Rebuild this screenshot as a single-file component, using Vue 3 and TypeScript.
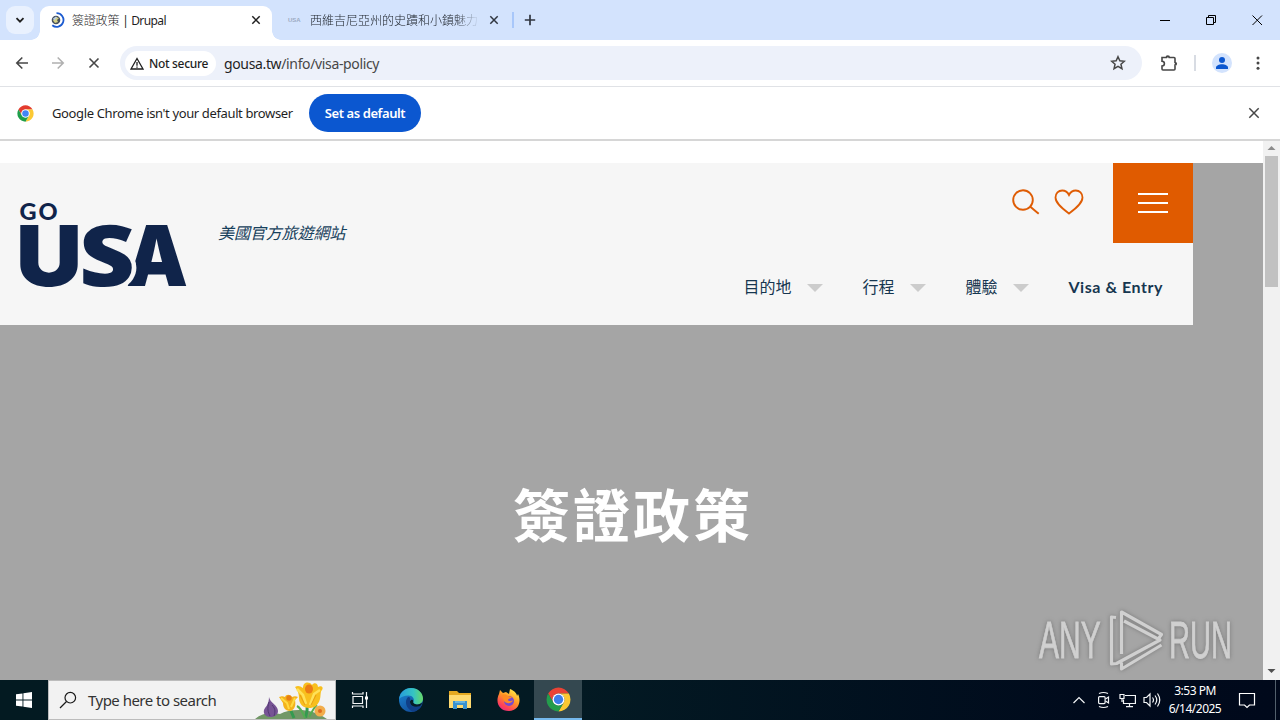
<script setup lang="ts">
interface NavItem {
  label: string
  menu: boolean
}

const nav: NavItem[] = [
  { label: '目的地', menu: true },
  { label: '行程', menu: true },
  { label: '體驗', menu: true },
  { label: 'Visa & Entry', menu: false },
]
</script>

<template>
  <div class="screen">
    <header class="tabs">
      <div class="tab-search">
        <svg width="10" height="10" viewBox="0 0 10 10"><path d="M1.5 3.2 5 6.7 8.5 3.2" fill="none" stroke="#1f1f1f" stroke-width="1.8" /></svg>
      </div>
      <div class="tab active">
        <svg class="favicon" width="16" height="16" viewBox="0 0 16 16">
          <circle cx="7" cy="8" r="4.3" fill="#46505e" />
          <path d="M4 8.5 7 5l3 1-2 2 1 2-3 1z" fill="#d6d184" />
          <path d="M4 6.5 7 4.5l1 1-3 3z" fill="#b9cfe8" />
          <path d="M7.5 1.2a6.8 6.8 0 1 1-4.2 12" fill="none" stroke="#1c5bd0" stroke-width="1.8" />
        </svg>
        <span class="tab-title">簽證政策 <span class="tab-latin">| Drupal</span></span>
        <svg class="x" width="10" height="10" viewBox="0 0 10 10"><path d="m1.3 1.3 7.4 7.4m0-7.4L1.3 8.7" stroke="#1f1f1f" stroke-width="1.5" /></svg>
      </div>
      <div class="tab idle">
        <span class="mini">USA</span>
        <span class="tab-title faded">西維吉尼亞州的史蹟和小鎮魅力</span>
        <svg class="x" width="10" height="10" viewBox="0 0 10 10"><path d="m1.3 1.3 7.4 7.4m0-7.4L1.3 8.7" stroke="#303640" stroke-width="1.5" /></svg>
      </div>
      <i class="tab-divider"></i>
      <svg class="plus" width="12" height="12" viewBox="0 0 12 12"><path d="M6 .8v10.4M.8 6h10.4" stroke="#303640" stroke-width="1.7" /></svg>
      <svg class="win-buttons" width="106" height="12" viewBox="0 0 106 12" fill="none" stroke="#000">
        <path d="M1 6.5h10M47.500 3.500h7v7h-7zM49.500 3.500v-2h7v7h-2M93.500 1.500l9.500 9.500m0-9.500l-9.500 9.500" />
      </svg>
    </header>

    <div class="toolbar">
      <svg class="nav-buttons" width="90" height="16" viewBox="0 0 90 16" fill="none" stroke-width="1.6">
        <path d="M14 8H3m5.300-5.500L2.800 8l5.500 5.500" stroke="#474747" />
        <path d="M38 8h11m-5.300-5.500L49.200 8l-5.500 5.500" stroke="#b0b0b0" />
        <path d="m75.500 3.500 9 9m0-9-9 9" stroke="#474747" />
      </svg>
      <div class="omnibox">
        <div class="chip">
          <svg width="14" height="13" viewBox="0 0 14 13" fill="none" stroke="#1f1f1f" stroke-width="1.3"><path d="M7 1.500 13 12H1zM7 5v3.800M7 9.500v1.300" /></svg>
          <span>Not secure</span>
        </div>
        <span class="url"><b>gousa.tw</b>/info/visa-policy</span>
        <svg class="star" width="16" height="16" viewBox="0 0 16 16"><path d="m8 1.700 1.850 4.100 4.500.45-3.400 3 1 4.450L8 11.400 4.050 13.700l1-4.450-3.400-3 4.500-.45z" fill="none" stroke="#474747" stroke-width="1.500" /></svg>
      </div>
      <svg class="ext" width="18" height="18" viewBox="0 0 18 18"><path d="M2 3.500h4.300a1.500 1.500 0 0 1 3 0H14a1 1 0 0 1 1 1v4a1.300 1.300 0 0 1 0 2.600V15a1 1 0 0 1-1 1H3a1 1 0 0 1-1-1v-3a2 2 0 0 0 0-4.800V3.500z" fill="none" stroke="#474747" stroke-width="1.600" /><path d="M6.300 3.500a1.500 1.500 0 0 1 3 0zM15 8.500a1.300 1.300 0 0 1 0 2.600z" fill="#474747" /></svg>
      <i class="bar-divider"></i>
      <svg class="avatar" width="20" height="20" viewBox="0 0 20 20"><circle cx="10" cy="10" r="10" fill="#d3e3fd" /><circle cx="10" cy="7" r="3" fill="#0b57d0" /><path d="M4 16v-1.500c0-2 3-3.300 6-3.300s6 1.300 6 3.300V16z" fill="#0b57d0" /></svg>
      <svg class="dots" width="4" height="16" viewBox="0 0 4 16" fill="#474747"><circle cx="2" cy="3" r="1.500" /><circle cx="2" cy="8" r="1.500" /><circle cx="2" cy="13.200" r="1.500" /></svg>
    </div>

    <div class="infobar">
      <svg width="17" height="17" viewBox="0 0 48 48">
        <circle cx="24" cy="24" r="23" fill="#fff" />
        <path d="M4.100 12.500A23 23 0 0 1 43.900 12.500H24A11.500 11.500 0 0 0 14 29.700z" fill="#e33b2e" />
        <path d="M43.900 12.500A23 23 0 0 1 24 47L34 29.700A11.500 11.500 0 0 0 24 12.500z" fill="#fcc934" />
        <path d="M24 47A23 23 0 0 1 4.100 12.500L14 29.700A11.500 11.500 0 0 0 34 29.700z" fill="#1e9e4a" />
        <circle cx="24" cy="24" r="11.500" fill="#fff" />
        <circle cx="24" cy="24" r="9.200" fill="#4285f4" />
      </svg>
      <span class="info-text">Google Chrome isn't your default browser</span>
      <button class="default-btn">Set as default</button>
      <svg class="info-x" width="12" height="12" viewBox="0 0 12 12"><path d="m1.300 1.300 9.400 9.400m0-9.400-9.400 9.400" stroke="#474747" stroke-width="1.500" /></svg>
    </div>

    <main class="viewport">
      <div class="page">
        <div class="site-header">
          <svg class="logo" width="170" height="90" viewBox="0 0 170 90">
            <g class="logo-type">
              <text class="go" x="0.500" y="18.500">GO</text>
              <text class="big" x="107" y="84.500" textLength="62" lengthAdjust="spacingAndGlyphs">A</text>
              <text class="big ess" x="60" y="84.500" textLength="56" lengthAdjust="spacingAndGlyphs">S</text>
              <text class="big" x="-3" y="84.500" textLength="66" lengthAdjust="spacingAndGlyphs">U</text>
            </g>
          </svg>
          <span class="tagline">美國官方旅遊網站</span>
          <div class="header-side">
            <div class="actions">
              <svg class="search" width="28" height="26" viewBox="0 0 28 26" fill="none" stroke="#df5c04" stroke-width="1.900"><circle cx="11" cy="11" r="9.800" /><path d="m18 17.500 8.700 7.300" /></svg>
              <svg class="heart" width="30" height="26" viewBox="0 0 30 26" fill="none" stroke="#df5c04" stroke-width="1.800"><path d="M15 24.500C9 20 1.500 14.500 1.500 8.500c0-4.200 3-7 6.700-7 3.200 0 5.500 1.800 6.800 4.500 1.300-2.700 3.600-4.500 6.800-4.500 3.700 0 6.700 2.800 6.700 7 0 6-7.500 11.500-13.500 16z" /></svg>
              <div class="burger"><i></i><i></i><i></i></div>
            </div>
            <nav class="menu">
              <span v-for="item in nav" :key="item.label" class="menu-item" :class="{ latin: !item.menu }">
                {{ item.label }}<i v-if="item.menu" class="caret"></i>
              </span>
            </nav>
          </div>
        </div>
        <h1>簽證政策</h1>
        <div class="watermark">
          <span class="wm">ANY</span>
          <svg width="56" height="62" viewBox="0 0 56 62" fill="none" stroke="#d0d0d0" stroke-width="3.200" stroke-linejoin="round">
            <path d="M7 7.500 2.500 7v47l5-.5L51 30 15 11M12.500 44V2l40 22.500-3 4M12.500 52.500v6.500l40-24" />
          </svg>
          <span class="wm run">RUN</span>
        </div>
      </div>
      <div class="scrollbar">
        <svg width="17" height="15" viewBox="0 1 17 15"><path d="M4.500 10 8.500 6l4 4z" fill="#8b8b8b" /></svg>
        <div class="thumb"></div>
        <svg class="down" width="17" height="17" viewBox="0 0 17 17"><path d="m4.500 6 4 4 4-4z" fill="#505050" /></svg>
      </div>
    </main>

    <footer class="taskbar">
      <div class="start">
        <svg width="16" height="16" viewBox="0 0 16 16" fill="#fff"><path d="M0 2.300 6.500 1.400v6.200H0zM7.400 1.300 16 0v7.600H7.400zM0 8.400h6.500v6.200L0 13.700zM7.400 8.400H16V16l-8.600-1.300z" /></svg>
      </div>
      <div class="search-box">
        <svg class="glass" width="18" height="18" viewBox="0 0 18 18" fill="none" stroke="#1a1a1a" stroke-width="1.200"><circle cx="11.300" cy="6.700" r="5.300" /><path d="M7.500 10.500 1 17" /></svg>
        <span class="search-text">Type here to search</span>
        <svg class="flowers" width="80" height="38" viewBox="0 0 80 38">
          <path d="M0 38c7-6 15-7 25-5 10-5 30-7 47 5z" fill="#719766" />
          <path d="M52 26c1 5-2 8-1 11M36 30l3 7" stroke="#359a50" stroke-width="3" fill="none" />
          <path d="M42 25c4 2 6 7 8 12M62 24c-3 2-5 7-8 12" stroke="#53ad50" stroke-width="2" fill="none" />
          <path d="M14 16c1 6 9 8 9 14 0 4-4 6-8 6s-7-3-6-7c1-3 5-5 5-13z" fill="#765394" />
          <path d="M14 21c-2 7-1 10 1 14m2-11c4 4 3 8 2 11" stroke="#513873" stroke-width="1" fill="none" />
          <path d="M24 16c3-1 4-1 6 0 1-3 5-3 7 0 2-1 4-1 6 0l-3 3c1 5 0 10-5 11-5 0-7-4-7-8z" fill="#f4b21b" />
          <path d="m26 17 6 5 2 6m6-11-4 9" stroke="#ffda42" stroke-width="2" fill="none" />
          <circle cx="34" cy="17" r="2.700" fill="#e87e13" />
          <path d="M40 6c3-2 5-1 8 1 0-6 6-7 9-3 2-3 6-2 6 2 3-2 6 0 4 3-2 2-1 6-2 9-2 7-6 9-11 9-6 0-10-4-10-10 0-4-1-7-4-11z" fill="#f8bf1d" />
          <path d="m42 8 6 6 3 9M65 9l-6 4-4 11" stroke="#ffe158" stroke-width="2.500" fill="none" />
          <path d="m45 14 5 10m11-10-5 10" stroke="#e79c12" fill="none" />
          <ellipse cx="54" cy="8" rx="4" ry="4.500" fill="#eb7c15" />
          <circle cx="65" cy="30" r="5.500" fill="#f2ad4b" /><circle cx="65" cy="30" r="2" fill="#df6b1d" />
        </svg>
      </div>
      <div class="app">
        <svg width="18" height="18" viewBox="0 0 18 18" fill="none" stroke="#f4f6f7" stroke-width="1.200"><path d="M2 5.500h9.500v7H2zM1.500 1v2h10.500V1M1.500 17v-2h10.500v2M15.500 1v16" /><path d="M14 5.500h3v3h-3z" fill="#fff" stroke="none" /></svg>
      </div>
      <div class="app edge">
        <svg width="26" height="26" viewBox="0 0 26 26">
          <defs>
            <linearGradient id="edgeTop" x1="0" x2="1"><stop stop-color="#279bdc" /><stop offset=".6" stop-color="#35c4c3" /><stop offset="1" stop-color="#67d967" /></linearGradient>
            <linearGradient id="edgeLow" x1="0" y1="0" x2=".6" y2="1"><stop stop-color="#1c8bd8" /><stop offset="1" stop-color="#124d9b" /></linearGradient>
          </defs>
          <circle cx="13" cy="13" r="12" fill="url(#edgeLow)" />
          <path d="M1.100 12C2 5 7 1 13 1c7 0 12 5 12 10.500 0 4-3 6-6.500 6-3 0-4-1.300-3.300-2.500 2-3-.7-6.500-4.700-6.500-4 0-7.500 1.500-9.400 3.500z" fill="url(#edgeTop)" />
          <path d="M10 10c-4 4-2 12 5 14.800 4-.8 7-3 8.500-6-6 2.800-12 .5-11.500-4 .1-2 1-3-.5-4.500z" fill="#103f87" />
          <path d="M12 14.500c1-2 2.500-2.200 3.300-.5-.6 1.600.5 2.800 2.500 3.300 2.500.6 5-.3 7-2-1 2-2 3-3 4-5 1.300-10-.3-9.800-4.800z" fill="#061c28" />
        </svg>
      </div>
      <div class="app folder">
        <svg width="22" height="20" viewBox="0 0 22 20"><path d="M0 1h8l2 2h12v15H0z" fill="#e5a921" /><path d="M0 5h22v13H0z" fill="#ffda70" /><path d="M4 11h14v8h-4v-4H8v4H4z" fill="#3a92cf" /><path d="M6 11h10v2H6z" fill="#68b4df" /></svg>
      </div>
      <div class="app fox">
        <svg width="24" height="24" viewBox="0 0 24 24">
          <defs><linearGradient id="foxFire" x1=".8" y1="0" x2=".2" y2="1"><stop stop-color="#fff14a" /><stop offset=".45" stop-color="#ff9427" /><stop offset=".8" stop-color="#ff405a" /><stop offset="1" stop-color="#e52b83" /></linearGradient></defs>
          <path d="M2 6 3 2l3 3 3-1 3 2 1-5c5 2 7 5 7 7l1-2c4 8 0 17-9 17C2 23-2 14 2 6z" fill="url(#foxFire)" />
          <circle cx="12" cy="13" r="5" fill="#7549d1" />
          <path d="M5 7c3-1 5 0 6 1l4 1c-1 2-4 1-4 3 1 2 4 1 5 0-1 4-7 4-9 1-1-2-1-4-2-6z" fill="#ff8b22" />
        </svg>
      </div>
      <div class="app current">
        <svg width="25" height="25" viewBox="0 0 48 48">
          <path d="M4.100 12.500A23 23 0 0 1 43.900 12.500H24A11.500 11.500 0 0 0 14 29.700z" fill="#e94335" />
          <path d="M43.900 12.500A23 23 0 0 1 24 47L34 29.700A11.500 11.500 0 0 0 24 12.500z" fill="#fcc832" />
          <path d="M24 47A23 23 0 0 1 4.100 12.500L14 29.700A11.500 11.500 0 0 0 34 29.700z" fill="#249c4c" />
          <circle cx="24" cy="24" r="11.500" fill="#fff" /><circle cx="24" cy="24" r="9" fill="#3d7eea" />
        </svg>
      </div>
      <div class="tray">
        <svg width="90" height="18" viewBox="0 0 90 18" fill="none" stroke="#f2f5f7" stroke-width="1.200">
          <path d="m1.500 12 5.500-5.500 5.500 5.500" />
          <rect x="26.600" y="5.600" width="6.500" height="7" rx="1" /><path d="m33.500 8 3-2v6l-3-2M27 2.500q4.500-2 9 0M27 15.500q4.500 2 9 0" />
          <path d="M53 4.500h10.400v8H51.500v-4M57.500 12.500v3M54 15.600h7M48 3.500h4v4h-4zM50 7.500v3.500" />
          <path d="M72 6.500h2.500L78 3v12l-3.500-3.500H72zM80.500 6.500q2 2.500 0 5M83 4.500q3.500 4.500 0 9M85.500 2.500q4.500 6.500 0 13" />
        </svg>
        <div class="clock"><span>3:53 PM</span><span>6/14/2025</span></div>
        <svg class="note" width="18" height="18" viewBox="0 0 18 18" fill="none" stroke="#fff" stroke-width="1.200"><path d="M1.500 2.500h15v11.500h-5l-2.500 2.500-2.500-2.500h-5z" /></svg>
        <i class="peek"></i>
      </div>
    </footer>
  </div>
</template>

<style>
html,
body {
  margin: 0;
  overflow: hidden;
}
</style>

<style scoped>
.screen {
  width: 1280px;
  height: 720px;
  display: flex;
  flex-direction: column;
  overflow: hidden;
  background: #fff;
  font-family: "Noto Sans", "Noto Sans CJK TC", sans-serif;
  color: #1f1f1f;
}
.screen * {
  box-sizing: border-box;
}
svg {
  flex: none;
  display: block;
}
span {
  white-space: nowrap;
}
.tabs {
  height: 40px;
  flex: none;
  display: flex;
  align-items: center;
  background: #d3e3fd;
  padding-left: 6px;
}
.tab-search {
  width: 28px;
  height: 28px;
  border-radius: 9px;
  background: #e9f1fe;
  display: grid;
  place-items: center;
}
.tab {
  display: flex;
  align-items: center;
}
.tab.active {
  position: relative;
  width: 232px;
  height: 34px;
  align-self: flex-end;
  margin-left: 6px;
  padding: 0 11px 6px 9px;
  border-radius: 9px 9px 0 0;
  background: #fff;
}
.tab.active::before,
.tab.active::after {
  content: "";
  position: absolute;
  bottom: 0;
  width: 9px;
  height: 9px;
}
.tab.active::before {
  left: -9px;
  background: radial-gradient(circle at 0 0, transparent 8.500px, #fff 9px);
}
.tab.active::after {
  right: -9px;
  background: radial-gradient(circle at 100% 0, transparent 8.500px, #fff 9px);
}
.tab-title {
  font-weight: 300;
  font-size: 12px;
  line-height: 18px;
  margin-left: 7px;
  padding-top: 1px;
  letter-spacing: -0.2px;
}
.tab-latin {
  font-weight: 400;
  letter-spacing: -0.6px;
  word-spacing: 0.5px;
}
.x {
  margin-left: auto;
}
.tab.idle {
  width: 227px;
  margin-left: 16px;
  height: 40px;
}
.mini {
  width: 15px;
  font: 700 6px "Liberation Sans", sans-serif;
  color: #9caac2;
}
.faded {
  width: 170px;
  overflow: hidden;
  letter-spacing: 0;
  color: #20262e;
  mask-image: linear-gradient(90deg, #000 145px, transparent 170px);
}
.tab.idle .x {
  margin-left: 9px;
}
.tab-divider {
  width: 2px;
  height: 16px;
  background: #a8c7fa;
  margin-left: -3px;
}
.plus {
  margin-left: 10px;
}
.win-buttons {
  margin-left: auto;
  margin-right: 15px;
}
.toolbar {
  height: 47px;
  flex: none;
  display: flex;
  align-items: center;
  padding-left: 14px;
  border-bottom: 1px solid #e0e2e6;
}
.omnibox {
  width: 1022px;
  height: 34px;
  margin-left: 16px;
  border-radius: 17px;
  background: #edf1fa;
  display: flex;
  align-items: center;
  padding: 0 16px 0 5px;
}
.chip {
  width: 91px;
  height: 25px;
  border-radius: 13px;
  background: #fff;
  display: flex;
  align-items: center;
  padding-left: 5px;
  gap: 5px;
  font-size: 12px;
  font-weight: 500;
  letter-spacing: -0.32px;
}
.url {
  margin-left: 8px;
  font-size: 14px;
  letter-spacing: -0.36px;
  color: #474747;
}
.url b {
  font-weight: 400;
  color: #1f1f1f;
}
.star {
  margin-left: auto;
}
.ext {
  margin-left: 18px;
}
.bar-divider {
  width: 2px;
  height: 16px;
  background: #d8dce3;
  margin-left: 16px;
}
.avatar {
  margin-left: 16px;
}
.dots {
  margin-left: 24px;
}
.infobar {
  height: 54px;
  flex: none;
  display: flex;
  align-items: center;
  padding: 0 20px 0 17px;
  border-bottom: 2px solid #d6d6d6;
}
.info-text {
  width: 241px;
  margin-left: 18px;
  font-size: 13px;
  letter-spacing: -0.37px;
}
.default-btn {
  width: 112px;
  height: 38px;
  margin-left: 16px;
  padding: 0;
  border: 0;
  border-radius: 19px;
  background: #0b57d0;
  color: #fff;
  font: 600 13px "Noto Sans", sans-serif;
  letter-spacing: -0.42px;
}
.info-x {
  margin-left: auto;
}
.viewport {
  height: 539px;
  flex: none;
  display: flex;
}
.page {
  position: relative;
  width: 1263px;
  background: #a5a5a5;
  border-top: 22px solid #fff;
}
.site-header {
  width: 1193px;
  height: 162px;
  background: #f6f6f6;
  display: flex;
  padding-left: 19px;
}
.logo {
  margin-top: 38px;
  overflow: visible;
}
.logo-type {
  font-family: Inter, "Open Sans", sans-serif;
  font-weight: 900;
  fill: #10244a;
}
.go {
  font-family: Lato, sans-serif;
  font-size: 23.500px;
  letter-spacing: 2px;
}
.big {
  font-size: 84px;
}
.ess {
  font-family: "Open Sans", sans-serif;
  font-weight: 800;
  font-size: 85px;
  paint-order: stroke;
  stroke: #f6f6f6;
  stroke-width: 8px;
}
.tagline {
  margin: 57px 0 0 29px;
  font: italic 400 16px/24px "Noto Sans CJK TC", sans-serif;
  letter-spacing: -0.1px;
  color: #17405c;
}
.header-side {
  margin-left: auto;
  display: flex;
  flex-direction: column;
  align-items: flex-end;
}
.actions {
  display: flex;
  height: 80px;
}
.search {
  margin: 26px 14px 0 0;
}
.heart {
  margin: 26px 29px 0 0;
}
.burger {
  width: 80px;
  height: 80px;
  background: #e05b00;
  display: flex;
  flex-direction: column;
  align-items: center;
  justify-content: center;
  gap: 7px;
}
.burger i {
  width: 30px;
  height: 2px;
  background: #fff;
}
.menu {
  display: flex;
  margin: 31px 30px 0 0;
}
.menu-item {
  display: flex;
  align-items: center;
  height: 24px;
  font: 400 16px "Noto Sans CJK TC", sans-serif;
  color: #163650;
}
.caret {
  margin: 4px 39px 0 16px;
  border: 8px solid transparent;
  border-top-color: #ccc;
  border-bottom: 0;
}
.latin {
  font: 700 16px Lato, sans-serif;
  letter-spacing: 0.55px;
}
h1 {
  margin: 145px 0 0;
  padding-left: 3px;
  text-align: center;
  color: #fff;
  font: 700 57px/84px "Noto Sans CJK TC", sans-serif;
  letter-spacing: 3px;
}
.watermark {
  position: absolute;
  left: 1039px;
  top: 447px;
  display: flex;
  align-items: center;
  filter: drop-shadow(0 0 2px #777);
}
.watermark svg {
  margin-left: 8px;
}
.wm {
  width: 62px;
  color: #d0d0d0;
  font: 400 51px/60px "Liberation Sans", sans-serif;
  -webkit-text-stroke: 0.8px #d0d0d0;
  transform: scaleX(0.59);
  transform-origin: 0 50%;
}
.run {
  margin-left: 4px;
  transform: scaleX(0.57);
}
.scrollbar {
  width: 17px;
  background: #f1f1f1;
  display: flex;
  flex-direction: column;
}
.thumb {
  width: 13px;
  height: 131px;
  margin-left: 2px;
  background: #c1c1c1;
}
.down {
  margin-top: auto;
}
.taskbar {
  height: 40px;
  flex: none;
  display: flex;
  background: linear-gradient(90deg, #031a21 0, #031a23 45%, #000a1c 85%, #00091b 100%);
}
.start {
  width: 48px;
  display: grid;
  place-items: center;
}
.search-box {
  width: 288px;
  background: #f2f2f2;
  border: 1px solid #bcbcbc;
  display: flex;
  align-items: center;
}
.glass {
  margin-left: 10px;
}
.search-text {
  width: 150px;
  margin-left: 11px;
  font-size: 15px;
  letter-spacing: -0.52px;
  color: #333;
}
.flowers {
  margin-left: 19px;
}
.app {
  width: 48px;
  display: grid;
  place-items: center;
}
.edge {
  width: 53px;
}
.folder {
  width: 46px;
}
.fox {
  width: 51px;
}
.current {
  background: #344850;
  border-bottom: 2px solid #76b9ed;
}
.tray {
  margin-left: auto;
  display: flex;
  align-items: center;
}
.clock {
  width: 60px;
  margin-left: 3px;
  display: flex;
  flex-direction: column;
  align-items: center;
  color: #fff;
  font-size: 12px;
  line-height: 18px;
  letter-spacing: -0.5px;
}
.note {
  margin-left: 13px;
}
.peek {
  width: 1px;
  height: 40px;
  margin: 0 4px 0 19px;
  background: #52606c;
}
</style>
